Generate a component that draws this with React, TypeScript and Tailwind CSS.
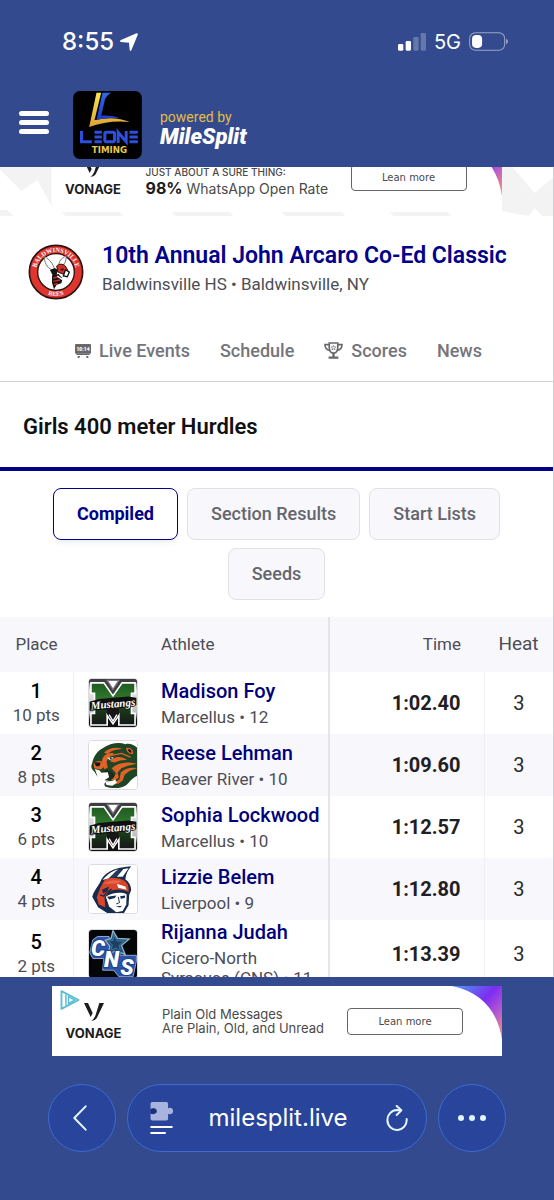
import type { ReactNode } from "react";
import clsx from "clsx";

interface Result {
  place: number;
  points: number;
  name: string;
  team: string;
  grade: number;
  time: string;
  heat: number;
  logo: () => ReactNode;
}

const results: Result[] = [
  { place: 1, points: 10, name: "Madison Foy", team: "Marcellus", grade: 12, time: "1:02.40", heat: 3, logo: MustangsLogo },
  { place: 2, points: 8, name: "Reese Lehman", team: "Beaver River", grade: 10, time: "1:09.60", heat: 3, logo: BeaverLogo },
  { place: 3, points: 6, name: "Sophia Lockwood", team: "Marcellus", grade: 10, time: "1:12.57", heat: 3, logo: MustangsLogo },
  { place: 4, points: 4, name: "Lizzie Belem", team: "Liverpool", grade: 9, time: "1:12.80", heat: 3, logo: WarriorLogo },
  { place: 5, points: 2, name: "Rijanna Judah", team: "Cicero-North Syracuse (CNS)", grade: 11, time: "1:13.39", heat: 3, logo: CnsLogo },
];

const views = ["Compiled", "Section Results", "Start Lists", "Seeds"];

function MustangsLogo() {
  return (
    <svg viewBox="0 0 148 148" className="size-full">
      <defs>
        <linearGradient id="mustang-green" x1="0" y1="0" x2="0" y2="1">
          <stop offset="0" stopColor="#1f5a22" />
          <stop offset="0.4" stopColor="#2f7a2c" />
          <stop offset="0.62" stopColor="#1a3b1b" />
          <stop offset="1" stopColor="#161616" />
        </linearGradient>
        <linearGradient id="mustang-back" x1="0" y1="0" x2="0" y2="1">
          <stop offset="0" stopColor="#4a4a4e" />
          <stop offset="0.25" stopColor="#e8e8ea" />
          <stop offset="0.7" stopColor="#bdbdbf" />
          <stop offset="0.85" stopColor="#111" />
        </linearGradient>
      </defs>
      <rect width="148" height="148" fill="url(#mustang-back)" />
      <path d="M0 0H148V12H104L74 52 44 12H0Z" fill="#3d3d42" />
      <path d="M56 4H92L74 32Z" fill="#fff" stroke="#77777c" strokeWidth="4" />
      <path
        d="M6 12H46L74 52 102 12H142V44H131V106H142V142H92V112L74 138 56 112V142H6V106H17V44H6Z"
        fill="url(#mustang-green)"
        stroke="#fff"
        strokeWidth="5"
      />
      <path d="M56 108L74 134 92 108V92H56Z" fill="#161616" />
      <path d="M62 110L74 130 86 110" fill="none" stroke="#fff" strokeWidth="4" />
      <path d="M2 70L30 62 120 54 146 58V80L118 88 50 94 2 98Z" fill="#101010" />
      <text
        x="74"
        y="88"
        textAnchor="middle"
        transform="rotate(-5 74 80)"
        fontFamily="Liberation Serif, serif"
        fontSize="34"
        fontWeight="700"
        fontStyle="italic"
        fill="#fff"
        stroke="#101010"
        strokeWidth="5"
        paintOrder="stroke"
      >
        Mustangs
      </text>
    </svg>
  );
}

function BeaverLogo() {
  return (
    <svg viewBox="0 0 148 148" className="size-full">
      <rect width="148" height="148" fill="#fff" />
      <path
        d="M10 68C14 44 28 30 42 22C64 8 92 2 112 10C124 6 138 12 148 20V108C132 114 124 130 112 138C96 148 66 146 50 140C44 132 50 126 60 122C42 122 24 112 18 96C8 88 4 80 10 68Z"
        fill="#1d4526"
      />
      <path d="M14 70C20 62 34 60 44 64L50 78 36 88 16 84Z" fill="#df6327" />
      <path d="M40 62C42 44 58 34 78 38L62 50 54 64 58 82 48 88Z" fill="#df6327" />
      <path d="M46 36C60 20 86 18 104 24C84 26 68 30 58 40Z" fill="#df6327" />
      <path d="M72 54C88 46 104 48 118 58L96 60 80 66 66 64Z" fill="#df6327" />
      <path d="M114 22C126 18 138 26 136 40C126 42 116 34 114 22Z" fill="#df6327" />
      <path d="M120 26C126 24 132 30 131 36C125 36 121 32 120 26Z" fill="#111" />
      <path d="M70 84C88 68 112 62 148 70L120 76 100 84 88 98 92 112 78 124 66 118 84 100Z" fill="#df6327" />
      <path d="M98 96C114 84 130 80 148 84L126 92 110 104 104 122 90 132 70 136 94 118Z" fill="#df6327" />
      <path d="M62 46L100 38 128 50" fill="none" stroke="#df6327" strokeWidth="4" />
      <path d="M50 88C66 92 76 98 80 106C74 120 62 122 54 118L46 100Z" fill="#1a2c1c" />
      <path d="M18 86L32 90 38 98 58 96 62 112 46 122 28 114Z" fill="#fff" />
      <path d="M50 126C62 122 78 126 80 118L86 128 72 138 54 136Z" fill="#fff" />
      <path d="M16 66L36 66 32 78 22 78Z" fill="#151515" />
      <path d="M56 52L76 50 66 60Z" fill="#fff" />
      <circle cx="67" cy="54" r="3" fill="#111" />
    </svg>
  );
}

function WarriorLogo() {
  return (
    <svg viewBox="0 0 148 148" className="size-full">
      <rect width="148" height="148" fill="#fff" />
      <path
        d="M34 54C44 26 72 8 130 4C120 16 114 28 112 44C122 52 130 62 130 78L124 92 122 124 108 148H56L28 130 10 98C14 82 24 70 34 54Z"
        fill="#172c4d"
      />
      <path d="M42 46C56 30 70 18 90 14L80 34 60 42Z" fill="#fff" />
      <path d="M60 42L86 16 98 14 82 38Z" fill="#23395b" />
      <path d="M86 36L106 12 122 10 104 36Z" fill="#fff" />
      <path d="M48 46C64 38 92 38 108 48C120 56 124 68 122 84C108 74 80 72 60 82L48 100 50 130 30 122 24 100 34 72Z" fill="#d8452a" />
      <path d="M42 58C60 46 84 44 100 50L86 56 60 58Z" fill="#e8674a" />
      <path d="M86 58L112 66 116 76 90 70Z" fill="#fff" />
      <path d="M40 76L62 66 58 78 44 88Z" fill="#172c4d" />
      <path d="M34 92L46 96 54 84 70 74" fill="none" stroke="#172c4d" strokeWidth="4" />
      <path d="M52 98C68 86 98 82 116 90L115 122 104 142 84 146 62 128Z" fill="#fff" />
      <path d="M56 98L84 94 80 102 62 106Z" fill="#172c4d" />
      <path d="M96 96L112 94 110 102 98 104Z" fill="#172c4d" />
      <path d="M90 98L94 116 84 120" fill="none" stroke="#172c4d" strokeWidth="3" />
      <path d="M82 128L102 126 96 131Z" fill="#172c4d" />
    </svg>
  );
}

function CnsLogo() {
  return (
    <svg viewBox="0 0 148 148" className="size-full">
      <rect width="148" height="148" fill="#050608" />
      <path
        d="M2 70L12 30 26 20H62L64 58H98L96 78H146V96L136 144H92L76 124H42L46 88H12Z"
        fill="#2c56a8"
        stroke="#93a9d4"
        strokeWidth="3"
      />
      <path d="M74 2L88 26 124 28 100 48 112 76 84 64 60 74 64 50 50 32 68 26Z" fill="#1f5378" stroke="#8fb4cc" strokeWidth="4" />
      <path d="M76 14L86 34 108 34 92 48 98 64 82 56 68 62 72 46 60 34 74 32Z" fill="#1c3f68" stroke="#4d8fa8" strokeWidth="2" />
      <g
        fontFamily="Roboto, sans-serif"
        fontWeight="900"
        fontStyle="italic"
        fontSize="68"
        fill="#fff"
        stroke="#1f4390"
        strokeWidth="7"
        paintOrder="stroke"
      >
        <text x="6" y="80">C</text>
        <text x="46" y="114">N</text>
        <text x="96" y="138">S</text>
      </g>
    </svg>
  );
}

function BeesLogo() {
  return (
    <svg viewBox="0 0 168 168" className="mt-2 size-14 shrink-0" role="img" aria-label="Baldwinsville">
      <defs>
        <path id="bees-top" d="M24 84A60 60 0 0 1 144 84" />
        <path id="bees-bottom" d="M12 84A72 72 0 0 0 156 84" />
      </defs>
      <circle cx="84" cy="84" r="80" fill="#e0352f" stroke="#2c1211" strokeWidth="5" />
      <circle cx="84" cy="84" r="55" fill="#fff" stroke="#2c1211" strokeWidth="4" />
      <g fontFamily="Liberation Serif, serif" fontWeight="700" fill="#fff" fontSize="19" textAnchor="middle">
        <text>
          <textPath href="#bees-top" startOffset="50%">BALDWINSVILLE</textPath>
        </text>
        <text>
          <textPath href="#bees-bottom" startOffset="50%">BEES</textPath>
        </text>
      </g>
      <path d="M72 78C56 70 48 54 50 38C64 46 76 60 80 76M92 68C92 52 100 42 114 36C116 50 108 62 100 70" fill="#fff" stroke="#777" strokeWidth="3" />
      <path d="M66 78L80 72 90 78 86 92 74 94Z" fill="#141414" />
      <path d="M86 66C92 60 104 58 112 66L120 80 104 90 90 84Z" fill="#d72b27" stroke="#141414" strokeWidth="3" />
      <path d="M96 76L108 73 104 81Z" fill="#141414" />
      <path d="M112 78L124 84 118 98 106 96Z" fill="#fff" stroke="#141414" strokeWidth="4" />
      <path d="M72 94L92 90 104 104 100 118 86 122 78 136 72 116Z" fill="#141414" />
      <path d="M76 102L94 98M76 112L96 108M78 122L88 118" stroke="#d72b27" strokeWidth="4" />
      <path d="M88 96L102 106 110 100" fill="none" stroke="#fff" strokeWidth="4" />
    </svg>
  );
}

function LeoneLogo() {
  return (
    <svg viewBox="0 0 206 204" className="h-17 w-[69px] shrink-0" role="img" aria-label="Leone Timing">
      <defs>
        <linearGradient id="leone-gold" x1="0" y1="0" x2="0" y2="1">
          <stop offset="0" stopColor="#f6e94a" />
          <stop offset="1" stopColor="#e0a234" />
        </linearGradient>
        <linearGradient id="leone-blue" x1="0" y1="0" x2="0" y2="1">
          <stop offset="0" stopColor="#2f6be6" />
          <stop offset="1" stopColor="#1c3bd0" />
        </linearGradient>
      </defs>
      <rect width="206" height="204" rx="20" fill="#000" />
      <path d="M70 5H84L64 88C100 78 140 80 170 93C130 88 84 94 48 108Z" fill="url(#leone-gold)" />
      <path d="M88 5H114C100 14 96 22 94 32L84 74C104 72 128 76 142 82C118 80 92 82 70 86Z" fill="url(#leone-blue)" />
      <g fill="none" stroke="#2c4fe0" strokeWidth="9">
        <path d="M25 120V152H56" />
        <path d="M64 124H86M64 138H86M64 152H86" />
        <rect x="95" y="124" width="29" height="28" rx="4" />
        <path d="M135 156V124L159 152V120" />
        <path d="M169 124H194M169 138H194M169 152H194" />
      </g>
      <text x="109" y="185" textAnchor="middle" fontFamily="DejaVu Sans, sans-serif" fontSize="26" fontWeight="700" fill="#e8c84c">
        TIMING
      </text>
    </svg>
  );
}

function VonageMark() {
  return (
    <div className="flex flex-col items-center gap-1 pt-0.5 text-[#1c1c1c]">
      <svg viewBox="0 0 60 54" className="h-[18px] w-5">
        <path d="M0 0H12L26 30 20 42Z" fill="currentColor" />
        <path d="M46 0H60L38 46Q33 54 22 54Q30 48 34 38Z" fill="currentColor" />
      </svg>
      <span className="font-['Inter',sans-serif] text-[13px] leading-4 font-bold">VONAGE</span>
    </div>
  );
}

interface VonageAdProps {
  corner: string;
  badge?: boolean;
  bodyClass: string;
  children: ReactNode;
}

function VonageAd({ corner, badge, bodyClass, children }: VonageAdProps) {
  return (
    <a
      href="#vonage"
      className="relative flex h-[70px] w-[450px] max-w-full shrink-0 items-center overflow-hidden bg-white font-['Inter',sans-serif] text-[#4a4a4a]"
    >
      <svg viewBox="0 0 50 54" className="absolute top-0 right-0 h-[54px] w-[50px]">
        <defs>
          <linearGradient id={corner} x1="0" y1="0" x2="1" y2="1">
            <stop offset="0" stopColor="#4aa0f0" />
            <stop offset="0.45" stopColor="#7d2cf2" />
            <stop offset="0.7" stopColor="#b45ad0" />
            <stop offset="1" stopColor="#ff9a6a" />
          </linearGradient>
        </defs>
        <path d="M0 0H50V54C46 26 30 6 0 0Z" fill={`url(#${corner})`} />
      </svg>
      {badge && (
        <svg viewBox="0 0 54 54" className="absolute top-1 left-2 size-5" fill="none" stroke="#5bbcd2" strokeWidth="5">
          <path d="M4 3V51L50 27Z" strokeLinejoin="round" />
          <path d="M16 12V42M23 18V37L40 27Z" strokeWidth="4" />
        </svg>
      )}
      <div className="w-[83px]">
        <VonageMark />
      </div>
      <div className={clsx("flex flex-1 items-center justify-between", bodyClass)}>
        <div>{children}</div>
        <span className="flex h-[27px] w-[116px] items-center justify-center rounded-sm border border-[#666] font-['DejaVu_Sans',sans-serif] text-[10px]">
          Lean more
        </span>
      </div>
    </a>
  );
}

function StatusBar() {
  return (
    <div className="flex h-[83px] items-center justify-between pr-[46px] pl-[62px] font-['Inter',sans-serif] text-white">
      <div className="flex items-center gap-1.5">
        <span className="text-2xl font-medium">8:55</span>
        <svg viewBox="0 0 54 54" className="size-[18px]" fill="currentColor">
          <path d="M50 1Q55 1 53 6L34 52Q32 56 29 51L27 29 3 27Q-3 25 3 21L46 2Z" />
        </svg>
      </div>
      <div className="flex items-center gap-2">
        <svg viewBox="0 0 84 54" className="h-[18px] w-7" fill="currentColor">
          <rect x="0" y="33" width="16" height="20" rx="4" />
          <rect x="23" y="24" width="16" height="29" rx="4" />
          <rect x="46" y="12" width="16" height="41" rx="4" opacity="0.25" />
          <rect x="68" y="0" width="16" height="53" rx="4" opacity="0.25" />
        </svg>
        <span className="text-xl">5G</span>
        <svg viewBox="0 0 116 56" className="h-[19px] w-[39px]">
          <rect x="2" y="2" width="104" height="52" rx="17" fill="none" stroke="#fff" strokeOpacity="0.5" strokeWidth="3" />
          <rect x="9" y="9" width="30" height="38" rx="12" fill="#fff" />
          <path d="M110 19V37Q116 33 116 28T110 19Z" fill="#fff" opacity="0.5" />
        </svg>
      </div>
    </div>
  );
}

function SiteHeader() {
  return (
    <header className="flex h-[84px] items-center pl-[19px]">
      <button type="button" aria-label="Menu" className="flex w-[30px] flex-col gap-1 pb-1.5">
        <span className="h-[5px] rounded-full bg-white" />
        <span className="h-[5px] rounded-full bg-white" />
        <span className="h-[5px] rounded-full bg-white" />
      </button>
      <a href="#leone" className="ml-6">
        <LeoneLogo />
      </a>
      <a href="#milesplit" className="ml-[18px] flex flex-col pt-2">
        <span className="text-sm leading-4 text-[#e3bd45]">powered by</span>
        <span className="text-[22px] leading-6 font-black text-white italic">MileSplit</span>
      </a>
    </header>
  );
}

function AdStrip() {
  return (
    <div className="relative flex h-[49px] items-end justify-center overflow-hidden bg-white pb-1">
      <svg viewBox="0 0 554 49" preserveAspectRatio="xMidYMin slice" className="absolute inset-0 size-full" fill="#f3f3f3">
        <path d="M0 0H52V39L38 13 22 24 8 10 0 2Z" />
        <path d="M0 43H8L14 49H0ZM60 43H118L124 49H66ZM170 43H228L234 49H176ZM280 43H340L346 49H286ZM388 43H446L452 49H394Z" />
        <path d="M502 0H513L535 26 554 10V49H543L535 41 529 49 502 44Z" />
      </svg>
      <VonageAd corner="corner-top" bodyClass="pl-[11px] pr-[35px]">
        <div className="pt-1.5 whitespace-nowrap">
          <p className="text-[10px] leading-4 font-medium">JUST ABOUT A SURE THING:</p>
          <p className="text-sm leading-4">
            <b className="text-base leading-4 text-[#1c1c1c]">98%</b> WhatsApp Open Rate
          </p>
        </div>
      </VonageAd>
    </div>
  );
}

function MeetHeader() {
  return (
    <section className="border-b border-[#d4d4d8]">
      <div className="flex items-center gap-[18px] px-7 pt-5">
        <BeesLogo />
        <div>
          <h1 className="text-[23px] leading-8 font-semibold text-[#00008b]">
            <a href="#meet">10th Annual John Arcaro Co-Ed Classic</a>
          </h1>
          <p className="text-[17px] leading-6 text-[#4d4d55]">Baldwinsville HS • Baldwinsville, NY</p>
        </div>
      </div>
      <nav className="flex h-[81px] items-center justify-center gap-[30px] pt-5 pl-1 text-lg font-medium text-[#74757b]">
        <a href="#live" className="flex items-center gap-2">
          <svg viewBox="0 0 48 42" className="h-3.5 w-4" fill="#68686c">
            <rect width="48" height="29" rx="3" />
            <path d="M4 29H44V33H4ZM8 36H15L13 42H8ZM33 36H40V42H35Z" />
            <text x="24" y="20" textAnchor="middle" fontFamily="Roboto, sans-serif" fontSize="15" fontWeight="900" fill="#fff">
              10:14
            </text>
          </svg>
          Live Events
        </a>
        <a href="#schedule">Schedule</a>
        <a href="#scores" className="flex items-center gap-2">
          <svg viewBox="0 0 58 52" className="h-[17px] w-[19px]" fill="none" stroke="#68686c" strokeWidth="5">
            <path d="M16 3H42V16C42 28 36 34 29 34S16 28 16 16Z" />
            <path d="M16 8H3C3 19 9 25 18 26M42 8H55C55 19 49 25 40 26" />
            <path d="M29 34V46M14 48H44" strokeWidth="7" />
            <path d="M29 10L31 15 36 15 32 19 34 24 29 21 24 24 26 19 22 15 27 15Z" strokeWidth="2" />
          </svg>
          Scores
        </a>
        <a href="#news">News</a>
      </nav>
    </section>
  );
}

function ViewTabs() {
  return (
    <div className="flex flex-wrap justify-center gap-x-[9px] gap-y-2 px-9 py-[17px]">
      {views.map((view, i) => (
        <button
          key={view}
          type="button"
          className={clsx(
            "h-[52px] rounded-lg border px-[23px] text-lg",
            i === 0
              ? "border-[#00008b] bg-white font-bold text-[#00008b] shadow-md shadow-black/5"
              : "border-[#e1e1e5] bg-[#f7f7fc] font-medium text-[#65666c]",
          )}
        >
          {view}
        </button>
      ))}
    </div>
  );
}

function ResultsTable() {
  return (
    <table className="w-full table-fixed border-collapse text-[#4d4d55]">
      <colgroup>
        <col className="w-[73px]" />
        <col className="w-[72px]" />
        <col />
        <col className="w-[155px]" />
        <col className="w-[69px]" />
      </colgroup>
      <thead className="bg-[#f7f7fc]">
        <tr className="h-[55px] text-[17px]">
          <th scope="col" className="font-normal">Place</th>
          <td />
          <th scope="col" className="border-r-2 border-[#e4e4e9] pl-4 text-left font-normal">Athlete</th>
          <th scope="col" className="pr-[23px] text-right font-normal">Time</th>
          <th scope="col" className="text-[19px] font-normal">Heat</th>
        </tr>
      </thead>
      <tbody>
        {results.map((r) => (
          <tr key={r.place} className="h-[62px] even:bg-[#f7f7fc]">
            <td className="border-r border-[#f0f0f4] text-center">
              <div className="text-xl leading-6 font-medium text-black">{r.place}</div>
              <div className="text-[17px] leading-6">{r.points} pts</div>
            </td>
            <td className="pl-3.5">
              <div className="size-[50px] overflow-hidden rounded border border-[#dcdce0]">
                <r.logo />
              </div>
            </td>
            <td className="border-r-2 border-[#e4e4e9] pl-4">
              <a href={`#athlete-${r.place}`} className="block text-xl leading-6 font-medium text-[#00007a]">
                {r.name}
              </a>
              <div className="mt-1 text-[17px] leading-5">
                {r.team} • {r.grade}
              </div>
            </td>
            <td className="border-r border-[#f0f0f4] pr-[23px] text-right text-xl font-bold text-[#1f2024]">{r.time}</td>
            <td className="text-center text-xl text-[#2a2b30]">{r.heat}</td>
          </tr>
        ))}
      </tbody>
    </table>
  );
}

function BrowserToolbar() {
  const glass = "flex h-[68px] items-center rounded-full border border-[#3d6bd0] bg-[#28449b] text-[#e4f6ff]";
  return (
    <div className="mx-auto mt-7 flex w-full max-w-xl items-center gap-[11px] px-12">
      <button type="button" aria-label="Back" className={clsx(glass, "w-[68px] shrink-0 justify-center")}>
        <svg viewBox="0 0 42 78" className="mr-1 h-[26px] w-3.5" fill="none" stroke="currentColor" strokeWidth="6">
          <path d="M38 4L4 39 38 74" strokeLinecap="round" strokeLinejoin="round" />
        </svg>
      </button>
      <div className={clsx(glass, "min-w-0 flex-1 justify-between pr-[18px] pl-[22px]")}>
        <button type="button" aria-label="Page menu">
          <svg viewBox="0 0 70 98" className="h-[33px] w-6">
            <path
              d="M6 0H48Q53 0 53 5V19C58 15 68 18 68 27S58 39 53 35V50Q53 55 48 55H6Q1 55 1 50V34C6 38 20 37 20 27S6 17 1 21V5Q1 0 6 0Z"
              fill="#a9b4de"
            />
            <path d="M2 34C6 36 18 36 18 27S6 19 2 21Z" fill="#1c3274" />
            <path d="M3 74H64M3 92H44" stroke="#fff" strokeWidth="6" strokeLinecap="round" />
          </svg>
        </button>
        <span className="pr-1 font-['Inter',sans-serif] text-2xl text-white">milesplit.live</span>
        <button type="button" aria-label="Reload">
          <svg viewBox="0 0 66 78" className="h-[26px] w-[22px]" fill="none" stroke="currentColor" strokeWidth="6">
            <path d="M62 42A29 30 0 1 1 33 15L44 16" strokeLinecap="round" />
            <path d="M32 3L46 16 32 30" strokeLinecap="round" strokeLinejoin="round" />
          </svg>
        </button>
      </div>
      <button type="button" aria-label="More" className={clsx(glass, "w-[68px] shrink-0 justify-center gap-[5px]")}>
        <span className="size-1.5 rounded-full bg-current" />
        <span className="size-1.5 rounded-full bg-current" />
        <span className="size-1.5 rounded-full bg-current" />
      </button>
    </div>
  );
}

export default function App() {
  return (
    <div className="flex h-screen flex-col bg-[#334a8e] font-['Roboto',sans-serif]">
      <StatusBar />
      <SiteHeader />
      <main className="min-h-0 flex-1 overflow-y-auto border-r border-[#d0d0d4] bg-white [scrollbar-width:none]">
        <AdStrip />
        <MeetHeader />
        <h2 className="border-b-4 border-[#00008b] px-[23px] pt-7 pb-[23px] text-[22px] leading-[34px] font-semibold text-[#101114]">
          Girls 400 meter Hurdles
        </h2>
        <ViewTabs />
        <ResultsTable />
      </main>
      <footer className="flex h-[223px] shrink-0 flex-col items-center pt-[9px]">
        <VonageAd corner="corner-bottom" badge bodyClass="pl-[27px] pr-[39px]">
          <p className="text-[13px] leading-3.5 whitespace-nowrap">
            Plain Old Messages
            <br />
            Are Plain, Old, and Unread
          </p>
        </VonageAd>
        <BrowserToolbar />
      </footer>
    </div>
  );
}
